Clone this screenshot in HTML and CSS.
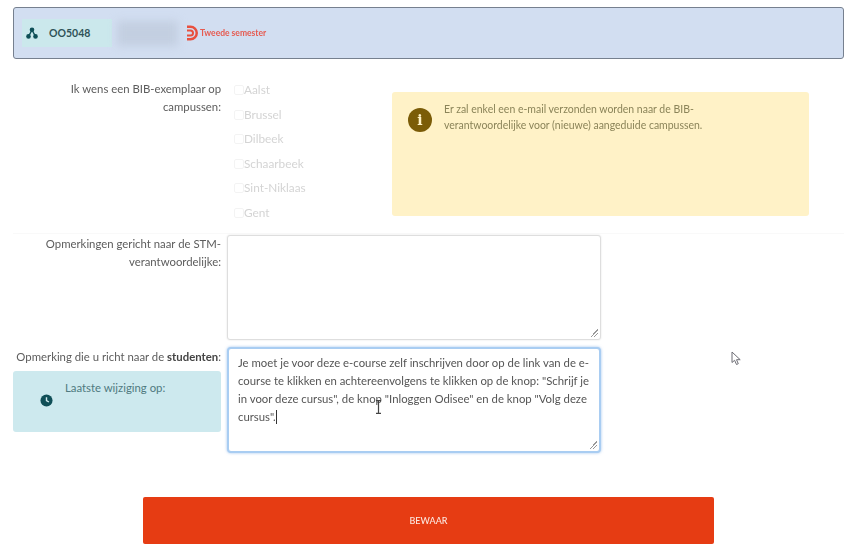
FILE: index.html
```html
<!DOCTYPE html>
<html lang="nl">
<head>
<meta charset="utf-8">
<title>Opmerkingen</title>
<link rel="stylesheet" href="styles.css">
</head>
<body>
<div class="page">
  <header class="banner">
    <div class="code-chip">
      <svg class="chip-icon" viewBox="0 0 12 12" width="12" height="12"><circle cx="6" cy="2.800" r="2.300" fill="#0f4f57"/><circle cx="2.500" cy="9.400" r="2.300" fill="#0f4f57"/><circle cx="9.500" cy="9.400" r="2.300" fill="#0f4f57"/><path d="M6 3 2.500 9.400M6 3l3.500 6.400" stroke="#0f4f57" stroke-width="1.400" fill="none"/></svg>
      <span>OO5048</span>
    </div>
    <div class="blurred"></div>
    <svg class="sem-icon" viewBox="0 0 12 16" width="12" height="16"><path d="M1 .5h3.500a7.500 7.500 0 0 1 0 15H1v-2.500h3.500a5 5 0 0 0 0-10H1z" fill="#e8503f"/><path d="M1 4.500h3.500a3.500 3.500 0 0 1 0 7H1V9.500h3.500a1.500 1.500 0 0 0 0-3H1z" fill="#e8503f"/></svg>
    <span class="semester">Tweede semester</span>
  </header>

  <section class="row row-campus">
    <div class="label">Ik wens een BIB-exemplaar op campussen:</div>
    <ul class="campus-list">
      <li><i class="box"></i>Aalst</li>
      <li><i class="box"></i>Brussel</li>
      <li><i class="box"></i>Dilbeek</li>
      <li><i class="box"></i>Schaarbeek</li>
      <li><i class="box"></i>Sint-Niklaas</li>
      <li><i class="box"></i>Gent</li>
    </ul>
    <aside class="notice">
      <span class="notice-icon">i</span>
      <p>Er zal enkel een e-mail verzonden worden naar de BIB-verantwoordelijke voor (nieuwe) aangeduide campussen.</p>
    </aside>
  </section>

  <section class="row row-stm">
    <div class="label">Opmerkingen gericht naar de STM-verantwoordelijke:</div>
    <div class="area"><span class="grip"></span></div>
  </section>

  <section class="row row-student">
    <div class="side">
      <div class="label label-one">Opmerking die u richt naar de <b>studenten</b>:</div>
      <div class="modified">
        <svg viewBox="0 0 14 14" width="13" height="13"><circle cx="7" cy="7" r="6.500" fill="#0f4f57"/><path d="M7 3.400V7l2.600 1.600" stroke="#cfeaee" stroke-width="1.500" fill="none"/></svg>
        <span>Laatste wijziging op:</span>
      </div>
    </div>
    <div class="area area-focus">Je moet je voor deze e-course zelf inschrijven door op de link van de e-course te klikken en achtereenvolgens te klikken op de knop: "Schrijf je in voor deze cursus", de knop "Inloggen Odisee" en de knop "Volg deze cursus".<span class="caret"></span><span class="grip"></span></div>
  </section>

  <div class="actions"><button class="save" type="button">BEWAAR</button></div>

  <svg class="ibeam" viewBox="0 0 7 14" width="7" height="14"><path d="M1 .7h5M1 13.300h5M3.500 .7v12.600" stroke="#444" stroke-width="1.200" fill="none"/></svg>
  <svg class="pointer" viewBox="0 0 11 15" width="11" height="15"><path d="M1 1v10.500l2.600-2.200L5.500 13.500l1.800-.8-1.800-4h3.700z" fill="#fff" stroke="#6d6d74" stroke-width="1"/></svg>
</div>
</body>
</html>
```
FILE: styles.css
```css
* { box-sizing: border-box; }
html, body { margin: 0; height: 100%; background: #fff; overflow: hidden; }
body { font-family: "Lato", "Noto Sans", sans-serif; font-size: 11.350px; color: #5a5a5a; }

.page { position: relative; width: 850px; height: 555px; padding: 7px 6px 0 13px; filter: blur(0.4px); }

.banner {
  height: 52px; display: flex; align-items: center;
  padding: 0 8px; background: #d2def1;
  border: 1px solid #76808f; border-radius: 3px;
}
.code-chip {
  width: 90px; height: 28px; display: flex; align-items: center; gap: 11px;
  padding-left: 4px; background: #cbe8ec; color: #2f5358; font-size: 10.500px; font-weight: 700;
}
.chip-icon { flex: none; }
.blurred { width: 61px; height: 25px; margin-left: 5px; background: #c3cfe1; filter: blur(4px); }
.sem-icon { margin-left: 8px; flex: none; }
.semester { margin-left: 2px; color: #e65a50; font-size: 8.500px; font-weight: 700; }

.row { display: grid; grid-template-columns: 208px 374px; column-gap: 6px; }
.label { text-align: right; line-height: 18px; color: #5c5c5c; }

.row-campus { grid-template-columns: 208px 159px 417px; height: 156px; margin-top: 19px; border-bottom: 1px solid #f9f9f9; }
.row-campus .label { padding-top: 2px; padding-left: 40px; }
.campus-list { list-style: none; margin: 0; padding: 0 0 0 7px; color: #d4d4d4; font-size: 11.800px; }
.campus-list li { height: 24.500px; line-height: 20px; display: flex; align-items: center; }
.box { width: 10px; height: 10px; border: 1px solid #f3f3f3; border-radius: 2px; flex: none; }
.notice {
  height: 124px; margin-top: 14px; display: flex; gap: 12px; align-items: flex-start;
  padding: 9px 50px 0 16px; background: #fff2c7; border-radius: 3px;
  color: #8b8459; font-size: 10.480px; line-height: 16px;
}
.notice p { margin: 0; }
.notice-icon {
  flex: none; width: 24px; height: 24px; margin-top: 7px; border-radius: 50%;
  background: #7b5c07; color: #fff2c7; font: 700 14px/24px "DejaVu Serif", serif; text-align: center;
}

.row-stm { margin-top: 1px; height: 105px; }
.row-stm .label { padding-left: 20px; }
.area {
  position: relative; height: 105px; background: #fff;
  border: 1px solid #dedede; border-radius: 3px;
  box-shadow: 0 0 2px rgba(0,0,0,.12);
  padding: 3px 9px; color: #555; line-height: 18px;
}
.grip {
  position: absolute; right: 2px; bottom: 2px; width: 8px; height: 8px;
  background: linear-gradient(135deg, transparent 50%, #999 50%, #999 58%, transparent 58%, transparent 72%, #999 72%, #999 80%, transparent 80%);
}

.row-student { margin-top: 7px; height: 106px; }
.side { display: flex; flex-direction: column; }
.label-one { white-space: nowrap; padding-top: 1px; }
.label-one b { color: #444; font-weight: 700; }
.modified {
  height: 61px; margin-top: 5px; padding: 10px 0 0 52px; position: relative;
  background: #cde9ee; border-radius: 3px; color: #4f7a80;
}
.modified svg { position: absolute; left: 27px; top: 23px; }
.area-focus {
  height: 106px; border: 2px solid #a9cdf2; border-radius: 4px;
  box-shadow: 0 0 3px rgba(120,170,230,.7); padding: 5px 9px;
}
.caret { display: inline-block; width: 1px; height: 14px; background: #333; vertical-align: -3px; }

.actions { display: flex; margin: 44px 0 0 130px; }
.save {
  width: 571px; height: 47px; border: 0; border-radius: 2px; background: #e63c13;
  color: #fbe9e2; font: 500 9px "Lato", sans-serif; text-transform: uppercase;
}

.ibeam { position: absolute; left: 375px; top: 400px; }
.pointer { position: absolute; left: 731px; top: 351px; }
```
